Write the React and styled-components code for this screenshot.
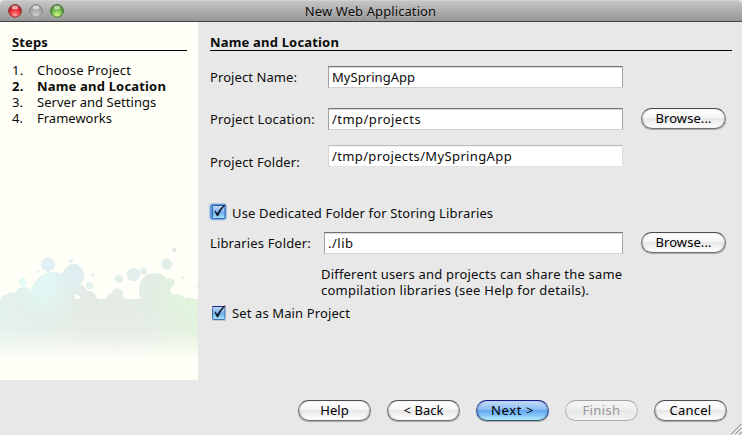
import React from 'react';
import styled, { createGlobalStyle, css } from 'styled-components';

const GlobalStyle = createGlobalStyle`
  * { box-sizing: border-box; }
  body { margin: 0; background: #e8e8e8; }
`;

const Window = styled.div`
  width: 742px;
  height: 435px;
  display: flex;
  flex-direction: column;
  position: relative;
  overflow: hidden;
  background: #e8e8e8;
  color: #0c0c0c;
  font: 13px/16px 'Noto Sans', 'Open Sans', sans-serif;
  white-space: nowrap;
`;

const TitleBar = styled.header`
  flex: none;
  height: 22px;
  display: grid;
  grid-template-columns: 72px 1fr 72px;
  align-items: start;
  background: linear-gradient(#dcdcdc 0, #c5c5c5 1px, #c0c0c0 3px, #969696 21px);
  border-bottom: 1px solid #414141;
  border-radius: 5px 5px 0 0;
`;

const Lights = styled.div`
  display: flex;
  gap: 7px;
  padding: 4px 0 0 8px;
`;

const Title = styled.div`
  padding: 3px 1px 0 0;
  text-align: center;
  letter-spacing: 0.1px;
  text-shadow: 0 1px 0 rgba(255, 255, 255, 0.25);
`;

const Body = styled.div`
  flex: 1;
  display: flex;
  align-items: flex-start;
`;

const Sidebar = styled.aside`
  width: 198px;
  height: 358px;
  display: flex;
  flex-direction: column;
  justify-content: space-between;
  background: #fffff7;
`;

const Heading = styled.h2`
  margin: 0;
  height: 17px;
  border-bottom: 1px solid #000;
  font-size: 13px;
  line-height: 16px;
  font-weight: 700;
  letter-spacing: ${(p) => p.$spacing}px;
`;

const StepsPanel = styled.div`
  padding: 12px 11px 0 12px;
`;

const StepList = styled.ol`
  list-style: none;
  margin: 11px 0 0;
  padding: 0;
`;

const Step = styled.li`
  display: grid;
  grid-template-columns: 25px 1fr;
  height: 16px;
  letter-spacing: ${(p) => p.$spacing}px;
  font-weight: ${(p) => (p.$current ? 700 : 400)};
`;

const Main = styled.main`
  flex: 1;
  height: 413px;
  display: flex;
  flex-direction: column;
  padding: 12px 11px 0 12px;
`;

const Row = styled.div`
  flex: none;
  display: grid;
  grid-template-columns: ${(p) => p.$label}px ${(p) => 431 - p.$label}px 85px;
  height: 22px;
  margin-top: ${(p) => p.$gap}px;
`;

const Label = styled.label`
  padding-top: ${(p) => p.$top ?? 3}px;
  letter-spacing: ${(p) => p.$spacing}px;
`;

const Field = styled.div`
  height: 22px;
  margin-right: 18px;
  padding: 2px 0 0 3px;
  background: #fff;
  letter-spacing: ${(p) => p.$spacing}px;
  border: 1px solid;
  border-color: #747474 #a6a6a6 #d2d2d2 #a0a0a0;
  box-shadow: inset 0 1px 0 #d9d9d9;
  ${(p) =>
    p.$readOnly &&
    css`
      border-color: #bcbcbc #dcdcdc #e2e2e2 #d6d6d6;
      box-shadow: inset 0 1px 0 #f4f4f4;
    `}
`;

const tones = {
  plain: css`
    border-color: #4b4b4b #757575 #727272;
    background: linear-gradient(#fff 0, #f6f6f6 45%, #e6e6e6 48%, #fff 100%);
  `,
  primary: css`
    border-color: #17178a #34549c #3c5672;
    background: linear-gradient(#c2dcf7 0, #8cbcf1 45%, #62a5ec 48%, #84c2f8 75%, #b5f2ff 100%);
  `,
  disabled: css`
    color: #999;
    border-color: #a2a2a2 #b4b4b4 #b0b0b0;
    background: linear-gradient(#f4f4f4 0, #efefef 45%, #e7e7e7 48%, #f3f3f3 100%);
    box-shadow: none;
  `,
};

const Button = styled.button`
  width: ${(p) => p.$width ?? 73}px;
  height: 21px;
  padding: 0 0 1px;
  border: 1px solid;
  border-radius: 11px;
  font: inherit;
  line-height: 17px;
  color: #000;
  letter-spacing: ${(p) => p.$spacing}px;
  box-shadow: 0 1px 1px rgba(0, 0, 0, 0.28), inset 1px 0 1px rgba(0, 0, 0, 0.2),
    inset -1px 0 1px rgba(0, 0, 0, 0.2);
  ${(p) => tones[p.$tone ?? 'plain']}
`;

const CheckRow = styled.div`
  flex: none;
  display: flex;
  align-items: flex-start;
  gap: 4px;
  height: 18px;
  margin-top: ${(p) => p.$gap}px;
`;

const CheckIcon = styled.svg`
  width: 20px;
  height: 20px;
  margin: -2px 0 0 -2px;
  flex: none;
`;

const Note = styled.p`
  margin: 12px 0 0 111px;
  height: 32px;
`;

const NoteLine = styled.span`
  display: block;
  letter-spacing: ${(p) => p.$spacing}px;
`;

const Footer = styled.footer`
  display: flex;
  gap: 16px;
  margin: auto 5px 14px 88px;
`;

const Grip = styled.svg`
  position: absolute;
  right: 0;
  bottom: 0;
`;

function Light({ id, edge, dark, mid, glow }) {
  return (
    <svg width="14" height="15" viewBox="0 0 14 15">
      <defs>
        <radialGradient id={id} cx="50%" cy="82%" r="75%">
          <stop offset="0" stopColor={glow} />
          <stop offset=".5" stopColor={mid} />
          <stop offset="1" stopColor={dark} />
        </radialGradient>
      </defs>
      <circle cx="7" cy="7.8" r="6.6" fill="#fff" opacity=".3" />
      <circle cx="7" cy="7" r="6.3" fill={`url(#${id})`} stroke={edge} strokeWidth="1" />
      <ellipse cx="7" cy="3.4" rx="3.2" ry="1.9" fill="#fff" opacity=".6" />
    </svg>
  );
}

function Check({ focused, id }) {
  return (
    <CheckIcon viewBox="0 0 20 20">
      <defs>
        <linearGradient id={id} x1="0" y1="0" x2="0" y2="1">
          <stop offset="0" stopColor="#c4dcf6" />
          <stop offset=".45" stopColor="#86b8ee" />
          <stop offset=".5" stopColor="#68a9ed" />
          <stop offset="1" stopColor="#a9e8ff" />
        </linearGradient>
      </defs>
      {focused && (
        <>
          <rect x="1" y="1" width="18" height="17.5" rx="4" fill="#5b93dc" opacity=".4" />
          <rect x="2" y="2" width="16" height="15.5" rx="3" fill="#4f8bdb" opacity=".8" />
        </>
      )}
      <rect x="5" y="17" width="13" height="1" fill="#000" opacity={focused ? 0 : 0.15} />
      <rect x="4.5" y="3.5" width="12.5" height="13" rx=".7" fill={`url(#${id})`} stroke={focused ? '#3568b4' : '#466fa8'} />
      <path d="M4.5 3.5H17" stroke={focused ? '#2c58a8' : '#20208c'} />
      <path d="M7 8.2 9.4 11.2C11 8 13.5 4.5 17.2 2.2L17.6 3C14.5 6 12 9.8 10.2 14.2H9L6.6 9.2Z" fill="#111a28" />
    </CheckIcon>
  );
}

const bubbles = [
  [48, 34.5, 7.2, '#e1eff3'], [71, 31, 2.2, '#e1eff3'], [38, 41.5, 1.6, '#e1f5f3'], [22.7, 52, 4, '#e0faf4'],
  [93, 44.7, 1.7, '#e1eff3'], [89.7, 55.5, 3.7, '#e2f1ed'], [119, 49, 4, '#e2f0ec'], [133.7, 44.5, 6.8, '#e2efec'],
  [143.7, 41.3, 3.5, '#e2efeb'], [166.8, 34.3, 5.7, '#e3ede9'], [174.3, 20, 2.2, '#e5e6e1'], [182.7, 47.5, 1.6, '#e1f5e8'],
  [199, 57, 2.4, '#e1f7e4'],
];

function Splash() {
  return (
    <svg width="198" height="134" viewBox="0 16 198 134">
      <defs>
        <linearGradient id="ground" x1="0" y1="0" x2="198" y2="0" gradientUnits="userSpaceOnUse">
          <stop offset="0" stopColor="#e3f1ec" />
          <stop offset=".45" stopColor="#e4ebe5" />
          <stop offset=".72" stopColor="#e3ece5" />
          <stop offset="1" stopColor="#e1f1dc" />
        </linearGradient>
        <radialGradient id="aqua" cx="44" cy="54" r="38" gradientUnits="userSpaceOnUse">
          <stop offset="0" stopColor="#e0f8f4" />
          <stop offset=".45" stopColor="#e1f6f2" stopOpacity=".8" />
          <stop offset="1" stopColor="#e3f1ec" stopOpacity="0" />
        </radialGradient>
        <radialGradient id="sky" cx="74" cy="43" r="25" gradientUnits="userSpaceOnUse">
          <stop offset="0" stopColor="#e0eff4" />
          <stop offset="1" stopColor="#e0eff4" stopOpacity="0" />
        </radialGradient>
        <radialGradient id="lime" cx="186" cy="70" r="36" gradientUnits="userSpaceOnUse">
          <stop offset="0" stopColor="#e1f6dd" />
          <stop offset="1" stopColor="#e1f3dc" stopOpacity="0" />
        </radialGradient>
        <linearGradient id="fade" x1="0" y1="76" x2="0" y2="132" gradientUnits="userSpaceOnUse">
          <stop offset="0" stopColor="#fffff7" stopOpacity="0" />
          <stop offset=".42" stopColor="#fffff7" stopOpacity=".08" />
          <stop offset=".7" stopColor="#fffff7" stopOpacity=".5" />
          <stop offset=".88" stopColor="#fffff7" stopOpacity=".88" />
          <stop offset="1" stopColor="#fffff7" />
        </linearGradient>
        <clipPath id="cloud">
          <rect x="0" y="69" width="198" height="65" />
          <path d="M29 70C30 54 41 42 52 42C57 42 60 43 62 44C65 37 70 34 74 34C80 34 84 40 84 45C84 50 82 53 79 55C83 54 86 57 86 61C92 60 97 64 97 70H80V66L75 64V70Z" />
          <circle cx="4" cy="68" r="3" />
          <circle cx="12" cy="69" r="7" />
          <circle cx="24" cy="66" r="9" />
          <circle cx="117.5" cy="64" r="5.5" />
          <circle cx="113" cy="70" r="7" />
          <circle cx="119" cy="69" r="5" />
          <path d="M141 70C136 57 141 43 155 43C161 43 164 46 167 49C170 47 175 49 174.5 53C174 57 170 57 170 61C170 63 172 65 175 64C180 64 184 67 185 69C188 66 192 67 193 70Z" />
        </clipPath>
      </defs>
      <g clipPath="url(#cloud)">
        <rect width="198" height="150" fill="url(#ground)" />
        <rect width="198" height="150" fill="url(#aqua)" />
        <rect width="198" height="150" fill="url(#sky)" />
        <rect width="198" height="150" fill="url(#lime)" />
        <rect width="198" height="150" fill="url(#fade)" />
      </g>
      {bubbles.map(([cx, cy, r, fill]) => (
        <circle key={`${cx}-${cy}`} cx={cx} cy={cy} r={r} fill={fill} />
      ))}
    </svg>
  );
}

const steps = [
  ['Choose Project', 0.19],
  ['Name and Location', 0.18],
  ['Server and Settings', 0.03],
  ['Frameworks', 0],
];

export default function App() {
  return (
    <Window>
      <GlobalStyle />
      <TitleBar>
        <Lights>
          <Light id="close" edge="#7c2a2a" dark="#b81824" mid="#f03840" glow="#ffa0a0" />
          <Light id="minimise" edge="#858585" dark="#999" mid="#b0b0b0" glow="#cdcdcd" />
          <Light id="zoom" edge="#3c6428" dark="#3f8a2c" mid="#80c458" glow="#d4f88c" />
        </Lights>
        <Title>New Web Application</Title>
      </TitleBar>
      <Body>
        <Sidebar>
          <StepsPanel>
            <Heading $spacing={0.14}>Steps</Heading>
            <StepList>
              {steps.map(([name, spacing], i) => (
                <Step key={name} $current={i === 1} $spacing={spacing}>
                  <span>{i + 1}.</span>
                  <span>{name}</span>
                </Step>
              ))}
            </StepList>
          </StepsPanel>
          <Splash />
        </Sidebar>
        <Main>
          <Heading $spacing={0.18}>Name and Location</Heading>
          <Row $label={118} $gap={15}>
            <Label $spacing={0.08}>Project Name:</Label>
            <Field $spacing={0.05}>MySpringApp</Field>
          </Row>
          <Row $label={118} $gap={20}>
            <Label $spacing={0.2}>Project Location:</Label>
            <Field $spacing={0.44}>/tmp/projects</Field>
            <Button $width={85} $spacing={0.07}>Browse...</Button>
          </Row>
          <Row $label={118} $gap={15}>
            <Label $top={9} $spacing={0.13}>Project Folder:</Label>
            <Field $readOnly $spacing={0.37}>/tmp/projects/MySpringApp</Field>
          </Row>
          <CheckRow $gap={37}>
            <Check focused id="check-libs" />
            <Label $top={1} $spacing={0.14}>Use Dedicated Folder for Storing Libraries</Label>
          </CheckRow>
          <Row $label={114} $gap={10}>
            <Label $spacing={0.15}>Libraries Folder:</Label>
            <Field $spacing={0.5}>./lib</Field>
            <Button $width={85} $spacing={0.07}>Browse...</Button>
          </Row>
          <Note>
            <NoteLine $spacing={0.2}>Different users and projects can share the same</NoteLine>
            <NoteLine $spacing={0.25}>compilation libraries (see Help for details).</NoteLine>
          </Note>
          <CheckRow $gap={7}>
            <Check id="check-main" />
            <Label $top={0} $spacing={0.12}>Set as Main Project</Label>
          </CheckRow>
          <Footer>
            <Button $spacing={0.06}>Help</Button>
            <Button $spacing={0.03}>&lt; Back</Button>
            <Button $tone="primary" $spacing={0.6}>Next &gt;</Button>
            <Button $tone="disabled" $spacing={0.37} disabled>Finish</Button>
            <Button $spacing={0.25}>Cancel</Button>
          </Footer>
        </Main>
      </Body>
      <Grip width="13" height="13" viewBox="0 0 13 13">
        <path d="M2 12.5 12.5 2M6 12.5 12.5 6M10 12.5 12.5 10" stroke="#777" strokeWidth="1" />
        <path d="M3 13 13 3M7 13 13 7" stroke="#fff" strokeWidth=".6" />
      </Grip>
    </Window>
  );
}
